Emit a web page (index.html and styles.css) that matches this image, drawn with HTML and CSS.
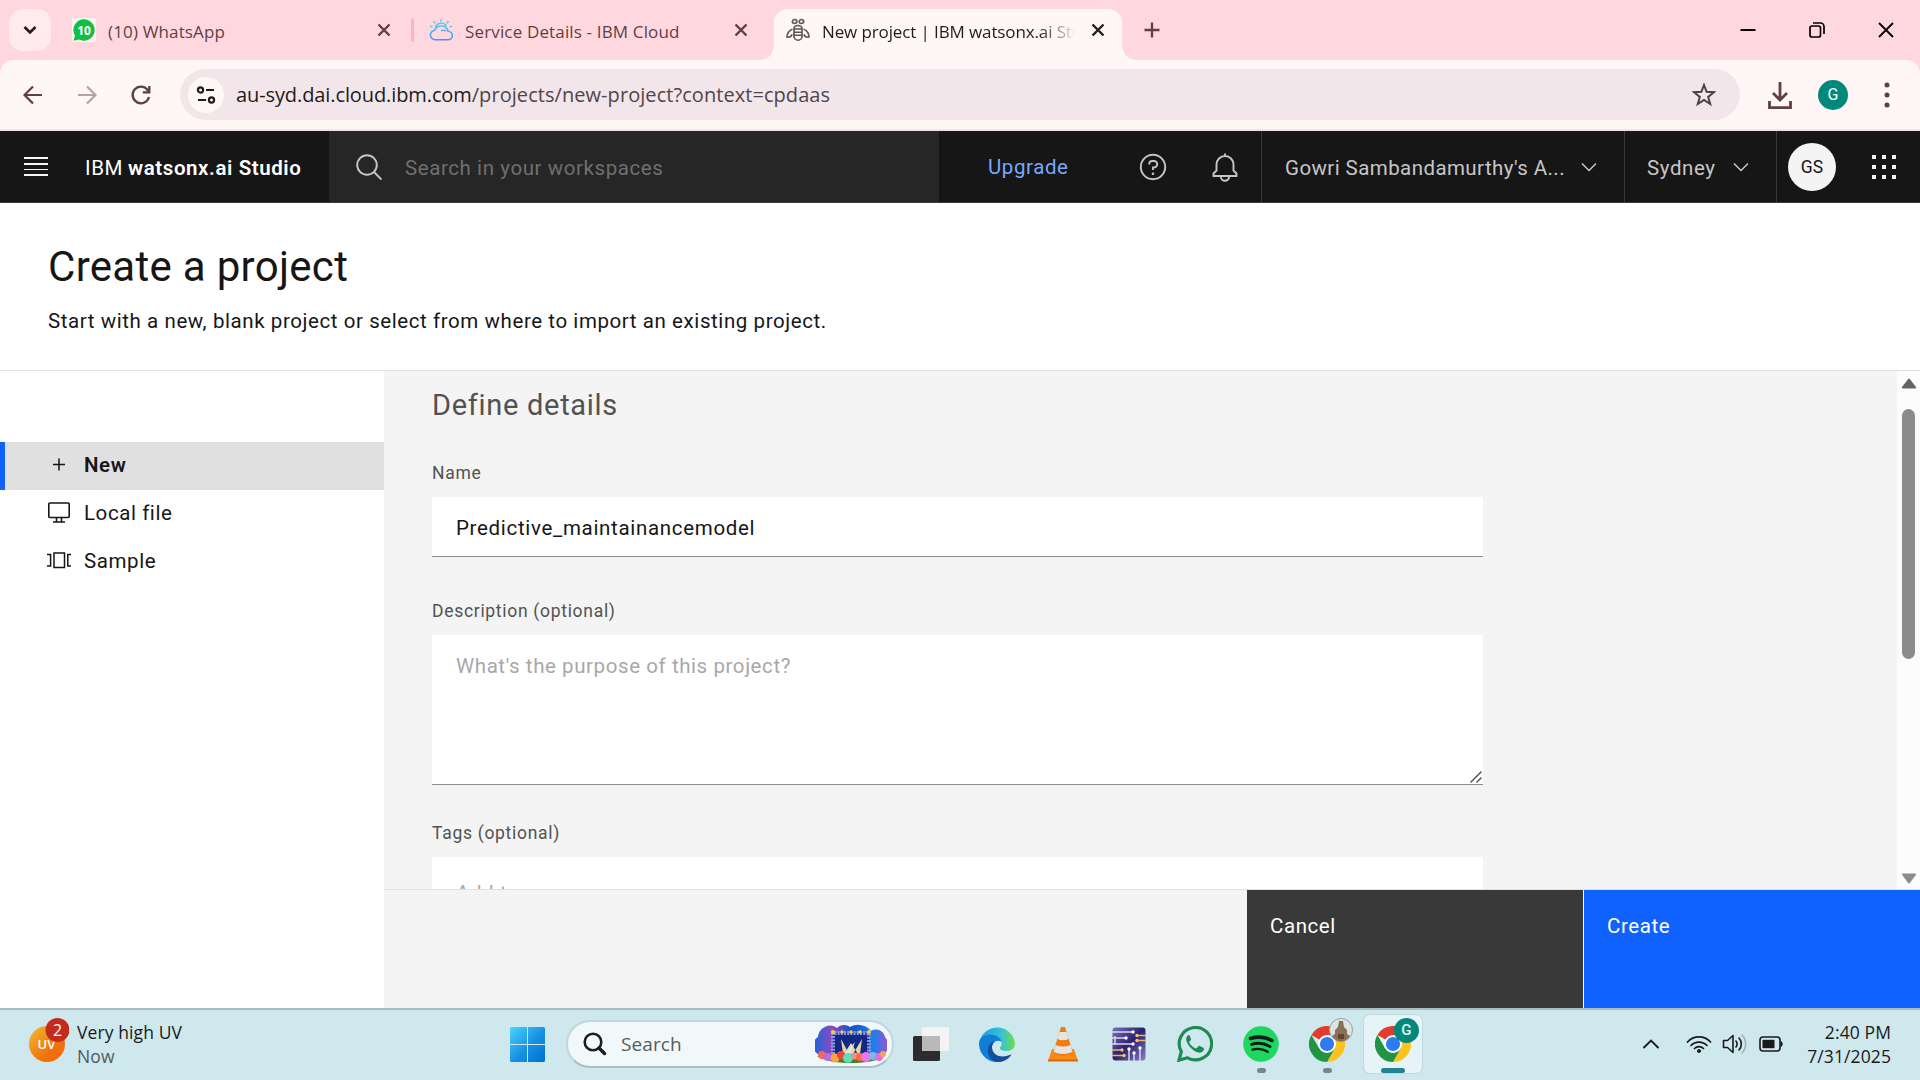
FILE: index.html
```html
<!DOCTYPE html>
<html lang="en">
<head>
<meta charset="utf-8">
<title>New project | IBM watsonx.ai Studio</title>
<link rel="stylesheet" href="styles.css">
</head>
<body>
<svg width="0" height="0" class="defs">
  <defs>
    <linearGradient id="win" gradientUnits="userSpaceOnUse" x1="0" y1="0" x2="35" y2="35"><stop offset="0" stop-color="#4cd3ff"/><stop offset=".55" stop-color="#1690e2"/><stop offset="1" stop-color="#0070d0"/></linearGradient>
    <linearGradient id="uv" x1="0" y1="0" x2="1" y2="1"><stop offset="0" stop-color="#eec030"/><stop offset=".65" stop-color="#f0700c"/><stop offset="1" stop-color="#ee6a10"/></linearGradient>
    <linearGradient id="cloud" gradientUnits="userSpaceOnUse" x1="0" y1="0" x2="0" y2="26"><stop offset="0" stop-color="#5fe0e0"/><stop offset="1" stop-color="#4589ff"/></linearGradient>
    <linearGradient id="edgeA" x1="0" y1="0" x2="1" y2="0"><stop offset="0" stop-color="#1b9de2"/><stop offset=".6" stop-color="#35c1d8"/><stop offset="1" stop-color="#6be04a"/></linearGradient>
    <linearGradient id="circ" x1="0" y1="0" x2="1" y2="1"><stop offset="0" stop-color="#7a72b8"/><stop offset=".5" stop-color="#2b2170"/><stop offset="1" stop-color="#8a80c0"/></linearGradient>
    <linearGradient id="balloon" x1="0" y1="0" x2="1" y2="0"><stop offset="0" stop-color="#1668d8"/><stop offset=".25" stop-color="#8a4ac0"/><stop offset=".5" stop-color="#1750c8"/><stop offset=".8" stop-color="#1a7ff0"/><stop offset="1" stop-color="#9a55c8"/></linearGradient>
    <symbol id="chrome" viewBox="0 0 36 36">
      <path d="M18 18 2.4 9A18 18 0 0 1 33.6 9Z" fill="#e33b2e"/>
      <path d="M18 9H33.6A18 18 0 0 1 18 36L25.8 22.5Z" fill="#fcc31e"/>
      <path d="M10.2 22.5 2.4 9A18 18 0 0 0 18 36L25.8 22.5Z" fill="#229342"/>
      <circle cx="18" cy="18" r="9" fill="#fff"/><circle cx="18" cy="18" r="7.1" fill="#2c7bf0"/>
    </symbol>
    <symbol id="close" viewBox="0 0 24 24"><path d="M6.5 6.5 17.5 17.5M17.5 6.5 6.5 17.5" stroke="currentColor" stroke-width="2.4" fill="none"/></symbol>
    <symbol id="chev" viewBox="0 0 16 10"><path d="M1 1.5 8 8.5 15 1.5" stroke="currentColor" stroke-width="1.5" fill="none"/></symbol>
  </defs>
</svg>

<div class="screen">
  <div class="tabstrip">
    <div class="tab-search"><svg width="16" height="12" viewBox="0 0 16 12"><path d="M2.5 3 8 8.5 13.5 3" stroke="#1f1a1b" stroke-width="2.6" fill="none"/></svg></div>
    <div class="tab tab-one">
      <svg width="24" height="24" viewBox="0 0 24 24"><path d="M0 24V0H24V24Z" fill="#fff" opacity=".65"/><path d="M12 1.3a10.7 10.7 0 1 1-5 20.2L1.6 22.8 3 17.6A10.7 10.7 0 0 1 12 1.3Z" fill="#0fc143"/><text x="12" y="16.6" text-anchor="middle" class="fav-num">10</text></svg>
      <span class="tab-title"><span class="t t-tab">(10) WhatsApp</span></span>
      <svg class="x" width="24" height="24"><use href="#close"/></svg>
    </div>
    <div class="tab-sep"></div>
    <div class="tab tab-two">
      <svg width="24" height="24" viewBox="0 0 24 26" preserveAspectRatio="none" fill="none" stroke="url(#cloud)" stroke-width="1.6"><path d="M6 23.5H18.5A4.6 4.6 0 0 0 19 14.3 7 7 0 0 0 5.500 13.600 5 5 0 0 0 6 23.500ZM6.500 10A6 6 0 0 1 17.500 8.800M12 4V1M6.300 5.600 4.500 3.400M17.700 5.600 19.500 3.400M3.400 9.600 1 8.800M20.600 9.600 23 8.800M12 14a5 5 0 0 1 5 0"/></svg>
      <span class="tab-title"><span class="t t-tab">Service Details - IBM Cloud</span></span>
      <svg class="x" width="24" height="24"><use href="#close"/></svg>
    </div>
    <div class="tab tab-active">
      <svg width="24" height="24" viewBox="0 0 24 27" preserveAspectRatio="none" fill="none" stroke="#5b5557" stroke-width="1.700"><circle cx="8.600" cy="4" r="2.200"/><circle cx="15.400" cy="4" r="2.200"/><path d="M8 12a4 3.600 0 0 1 8 0v8.500a4 4.500 0 0 1-8 0ZM8 12.500H16M8 16H16M8 19.500H16M6.400 12.500C3.500 14 1 17.500 1 21.500c3 .4 4.600-.5 5-3M17.600 12.500C20.500 14 23 17.500 23 21.500c-3 .4-4.600-.5-5-3"/></svg>
      <span class="tab-title fade"><span class="t t-tab3">New project | IBM watsonx.ai Studio</span></span>
      <svg class="x" width="24" height="24"><use href="#close"/></svg>
    </div>
    <svg class="new-tab" width="24" height="24" viewBox="0 0 24 24"><path d="M12 4.500V19.500M4.500 12H19.500" stroke="#5f3f46" stroke-width="2.300"/></svg>
    <div class="win-controls">
      <div><svg width="18" height="18" viewBox="0 0 18 18"><path d="M1.500 9H16.500" stroke="#000" stroke-width="2"/></svg></div>
      <div><svg width="18" height="18" viewBox="0 0 18 18" fill="none" stroke="#000" stroke-width="1.700"><rect x="2" y="5" width="10.500" height="11" rx="2"/><path d="M5 2H12.500A3.500 3.500 0 0 1 16 5.500V13"/></svg></div>
      <div><svg width="18" height="18" viewBox="0 0 18 18"><path d="M2 2 16 16M16 2 2 16" stroke="#000" stroke-width="1.800"/></svg></div>
    </div>
  </div>

  <div class="toolbar-wrap"><div class="toolbar">
    <svg class="tb" width="24" height="24" viewBox="0 0 24 24" fill="none" stroke="#5f3f46" stroke-width="2.200"><path d="M21 12H4M12 3.500 3.500 12 12 20.500"/></svg>
    <svg class="tb" width="24" height="24" viewBox="0 0 24 24" fill="none" stroke="#b3a3a6" stroke-width="2.200"><path d="M3 12H20M12 3.500 20.500 12 12 20.500"/></svg>
    <svg class="tb" width="24" height="24" viewBox="0 0 24 24" fill="none" stroke="#5f3f46" stroke-width="2.300"><path d="M20 14A8.300 8.300 0 1 1 18.600 7L20 9"/><path d="M20.300 3V9.400H13.800"/></svg>
    <div class="omnibox">
      <div class="site-info"><svg width="20" height="20" viewBox="0 0 20 20" fill="none" stroke="#1f1a1b" stroke-width="2.200"><circle cx="4.500" cy="5" r="2.600"/><path d="M10 5H18M2 15H10"/><circle cx="15.500" cy="15" r="2.600"/></svg></div>
      <span class="url"><span class="t t-url1">au-syd.dai.cloud.ibm.com</span><span class="t t-url2">/projects/new-project?context=cpdaas</span></span>
      <svg width="24" height="26" viewBox="0 0 24 26" fill="none" stroke="#4b4145" stroke-width="2"><path d="M12 3 14.600 9.800 22 10.200 16.200 14.900 18.200 22 12 18 5.800 22 7.800 14.900 2 10.200 9.400 9.800Z"/></svg>
    </div>
    <svg class="dl" width="24" height="30" viewBox="0 0 24 30" fill="none" stroke="#5f3f46" stroke-width="2.800"><path d="M12 2V20M5 13 12 20 19 13M1.500 21V27.600H22.500V21"/></svg>
    <div class="avatar-g">G</div>
    <svg class="dots" width="24" height="26" viewBox="0 0 24 26" fill="#5f3f46"><circle cx="12" cy="3" r="2.500"/><circle cx="12" cy="13" r="2.500"/><circle cx="12" cy="23" r="2.500"/></svg>
  </div></div>

  <header class="app-header">
    <div class="menu"><i></i><i></i><i></i><i></i></div>
    <div class="brand"><span class="t">IBM</span><b class="t">watsonx.ai Studio</b></div>
    <div class="app-search">
      <svg width="26" height="28" viewBox="0 0 26 28" fill="none" stroke="#c6c6c6" stroke-width="1.900"><circle cx="11" cy="12" r="9.800"/><path d="M18 19 25.500 26.500"/></svg>
      <span class="t">Search in your workspaces</span>
    </div>
    <div class="upgrade"><span class="t">Upgrade</span></div>
    <svg class="help" width="28" height="28" viewBox="0 0 28 28" fill="none" stroke="#c6c6c6" stroke-width="1.900"><circle cx="14" cy="14" r="12.200"/><path d="M10.200 11.500V11A3 3 0 0 1 13.200 8H15A3.200 3.200 0 0 1 15 14.400H14V17"/><circle cx="14" cy="20.800" r="1.300" fill="#c6c6c6" stroke="none"/></svg>
    <svg class="bell" width="28" height="30" viewBox="0 0 28 30" fill="none" stroke="#c6c6c6" stroke-width="1.900"><path d="M14 1.500V4M5.500 18.500V12.500A8.500 8.500 0 0 1 22.500 12.500V18.500L25.500 21.500V24H2.500V21.500ZM9.800 24.500A4.200 4.200 0 0 0 18.200 24.500"/></svg>
    <div class="account"><span class="t t-account">Gowri Sambandamurthy's A...</span><svg width="16" height="10"><use href="#chev"/></svg></div>
    <div class="region"><span class="t">Sydney</span><svg width="16" height="10"><use href="#chev"/></svg></div>
    <div class="user"><div class="user-circle">GS</div></div>
    <div class="switcher"><i></i><i></i><i></i><i></i><i></i><i></i><i></i><i></i><i></i></div>
  </header>

  <section class="page-head">
    <h1>Create a project</h1>
    <p>Start with a new, blank project or select from where to import an existing project.</p>
  </section>

  <div class="body">
    <nav class="side">
      <a class="item active"><svg width="24" height="24" viewBox="0 0 24 24" stroke="#161616" stroke-width="1.500"><path d="M12 5.500V17.500M6 11.500H18"/></svg><span>New</span></a>
      <a class="item"><svg width="24" height="24" viewBox="0 0 24 24" fill="none" stroke="#161616" stroke-width="1.600"><rect x="1.800" y="2" width="20.400" height="14.500" rx="1"/><path d="M9.500 16.500V20.500M14.500 16.500V20.500M6 21H18"/></svg><span>Local file</span></a>
      <a class="item"><svg width="24" height="24" viewBox="0 0 24 24" fill="none" stroke="#161616" stroke-width="1.500"><rect x="7" y="4" width="10.500" height="14.500"/><path d="M0 5.500H3.600V17H0M24 5.500H20.800V17H24"/></svg><span>Sample</span></a>
    </nav>
    <div class="main">
      <div class="scroll">
        <form class="form">
          <h2>Define details</h2>
          <label>Name</label>
          <div class="input value">Predictive_maintainancemodel</div>
          <label class="l-desc">Description (optional)</label>
          <div class="input area">What's the purpose of this project?<svg class="grip" width="12" height="12" viewBox="0 0 12 12" stroke="#4a4a4a" stroke-width="1.400"><path d="M.5 11.500 11.500 .5M6.500 11.500 11.500 6.500"/></svg></div>
          <label class="l-tags">Tags (optional)</label>
          <div class="input tags">Add tags</div>
        </form>
        <div class="scrollbar">
          <svg width="16" height="11" viewBox="0 0 16 11"><path d="M8 1.500 14.200 9.500H1.800Z" fill="#636363" stroke="#636363" stroke-width="2" stroke-linejoin="round"/></svg>
          <div class="thumb"></div>
          <svg width="16" height="11" viewBox="0 0 16 11"><path d="M8 9.500 14 1.500H2Z" fill="#8b8b8b" stroke="#8b8b8b" stroke-width="2" stroke-linejoin="round"/></svg>
        </div>
      </div>
      <div class="actions">
        <div class="btn cancel">Cancel</div>
        <div class="btn create">Create</div>
      </div>
    </div>
  </div>

  <div class="taskbar">
    <div class="weather">
      <svg width="40" height="44" viewBox="0 0 40 44"><circle cx="18" cy="26" r="18" fill="url(#uv)"/><text x="17.500" y="31" text-anchor="middle" class="uv-text">UV</text><circle cx="28.500" cy="12" r="12" fill="#c42b1c"/><text x="28.500" y="18" text-anchor="middle" class="uv-num">2</text></svg>
      <div class="weather-text"><span class="t-uv">Very high UV</span><span class="t-now">Now</span></div>
    </div>
    <svg class="start" width="35" height="35" viewBox="0 0 35 35" fill="url(#win)"><path d="M1.500 0H17V17H0V1.500Q0 0 1.500 0ZM18 0H33.500Q35 0 35 1.500V17H18ZM0 18H17V35H1.500Q0 35 0 33.500ZM18 18H35V33.500Q35 35 33.500 35H18Z"/></svg>
    <div class="task-search">
      <svg width="24" height="24" viewBox="0 0 24 24" fill="none" stroke="#1d1d1d" stroke-width="2.600"><circle cx="10" cy="10" r="8.300"/><path d="M16 16 21.500 21.500" stroke-width="3.400" stroke-linecap="round"/></svg>
      <span class="task-search-label">Search</span>
      <svg width="72" height="40" viewBox="0 0 72 40">
        <path d="M5 31A10 10 0 0 1 3 13 12 12 0 0 1 22 4 10 10 0 0 1 35 3 15 13 0 0 1 56 7 9 9 0 0 1 70 13 12 12 0 0 1 68 31Z" fill="url(#balloon)"/>
        <path d="M18 30V9H54V30" fill="#122a86" stroke="#8c9bdc" stroke-width="4" stroke-dasharray="2 1.200"/>
        <path d="M26 15 34 30H28ZM47 15 38 30H45ZM29 30 36 19 43 30Z" fill="#e8d79a"/><path d="M30 29 40 18 36 29Z" fill="#dfe6e4"/>
        <g fill="#f6cf45"><circle cx="18" cy="8" r="2"/><circle cx="27" cy="8" r="1.700"/><circle cx="36" cy="8" r="1.700"/><circle cx="45" cy="8" r="1.700"/><circle cx="54" cy="8" r="2"/></g>
        <path d="M2 32H70Q60 39 36 39T2 32Z" fill="#4c7f2c"/>
        <g><circle cx="7" cy="31" r="4" fill="#f56a5a"/><circle cx="13" cy="33" r="4" fill="#b86ae8"/><circle cx="20" cy="34" r="4.500" fill="#f9a63c"/><circle cx="26" cy="31" r="4" fill="#ee4440"/><circle cx="33" cy="34" r="5" fill="#5fe0b0"/><circle cx="40" cy="32" r="3.500" fill="#f8889a"/><circle cx="45" cy="33" r="4" fill="#ff6a3a"/><circle cx="51" cy="33" r="5" fill="#e877ee"/><circle cx="58" cy="32" r="4" fill="#7ab8f0"/><circle cx="64" cy="33" r="4" fill="#ea6ad0"/><circle cx="68" cy="30" r="3" fill="#f9a05a"/></g>
      </svg>
    </div>
    <div class="apps">
      <div class="app"><svg width="36" height="36" viewBox="0 0 36 36"><rect x="0" y="10" width="27" height="25" rx="1.500" fill="#2c2c2c"/><rect x="9" y="1" width="27" height="24" rx="1.500" fill="#f3f3f3"/><path d="M9 10H27V25H9Z" fill="#b9b9b9"/></svg></div>
      <div class="app"><svg width="36" height="36" viewBox="0 0 36 36"><path d="M1 14A18 18 0 0 1 36 17C36 23 32 25 28 25 24 25 21 24 21 22 21 21 23 20 22.500 17 22 12 16 9 11 9.500 6 10 2 12 1 14Z" fill="url(#edgeA)"/><path d="M0 18C0 11 6 8.500 11 8.500 17 8.500 22 12 22.500 15.500 17 13 13 17 13 22 13 28 17 33 23 35.300A18 18 0 0 1 0 18Z" fill="#0f7fd6"/><path d="M15.500 15.200C11 20 13 26 17.500 29 23 32 29 29.500 32.500 28.500 30 33 24 36.500 18 36 11 34.500 8 28 9 23 9.500 19 12 16 15.500 15.200Z" fill="#124f9c"/></svg></div>
      <div class="app"><svg width="32" height="36" viewBox="0 0 32 36"><path d="M5 23H27L31 35H1Z" fill="#f78b14"/><path d="M1 33.500H31V35.500H1Z" fill="#d86808"/><path d="M14 1H18L26 27Q16 33 6 27Z" fill="#f07c0c"/><path d="M12.500 6H19.500L21.600 13Q16 15.500 10.400 13ZM8.500 19Q16 22 23.500 19L25.500 26Q16 30 6.500 26Z" fill="#e4e4e4"/></svg></div>
      <div class="app"><svg width="34" height="34" viewBox="0 0 34 34"><rect x=".5" y=".5" width="33" height="33" rx="3" fill="url(#circ)"/><g fill="none" stroke="#d9d6f2" stroke-width="1.500"><path d="M0 5H20M0 11H13M3 18V9M0 17H20M17 34V22M22 34V26M28 34V20"/><path d="M24 8.500H34M24 13.500H34M0 23H10M0 28.500H12" stroke="#efb45e"/></g><g fill="#fff"><circle cx="21" cy="5" r="1.700"/><circle cx="14" cy="11" r="1.700"/><circle cx="21" cy="17" r="1.700"/><circle cx="17" cy="22" r="1.700"/><circle cx="22" cy="26" r="1.700"/><circle cx="28" cy="21" r="1.700"/></g><g fill="#f5c477"><circle cx="25" cy="8.500" r="1.700"/><circle cx="25" cy="13.500" r="1.700"/><circle cx="10" cy="23" r="1.700"/><circle cx="12" cy="28.500" r="1.700"/></g></svg></div>
      <div class="app"><svg width="36" height="36" viewBox="0 0 36 36"><path d="M2 34.200 4.300 25.600A16.200 16.200 0 1 1 10.500 31.800Z" fill="none" stroke="#1f8a55" stroke-width="3.200"/><path d="M12.500 9.200c-.7-.3-1.600 0-2.300.8-1.600 1.900-1.300 4.800.6 8 2.800 4.600 7.200 8.100 11.400 8.700 2.200.2 4.300-1.300 4.700-3.200.2-.9.100-1.400-.5-1.700l-3.700-1.800c-.6-.3-1-.2-1.500.4l-1.400 1.700c-.4.500-.9.500-1.500.2-2.500-1.200-4.500-3-5.900-5.500-.3-.5-.2-.9.200-1.300l1.200-1.500c.3-.4.300-.8.100-1.300Z" fill="#1f8a55"/></svg></div>
      <div class="app"><svg width="36" height="36" viewBox="0 0 36 36"><circle cx="18" cy="18" r="17.800" fill="#1ed760"/><g fill="none" stroke="#101f16" stroke-linecap="round"><path d="M7.500 12.500Q19 9 29 14.500" stroke-width="3.600"/><path d="M8.500 18.300Q18 15.500 27 20.500" stroke-width="2.900"/><path d="M9.500 23.600Q17.500 21.500 24.800 25.800" stroke-width="2.300"/></g></svg><i class="dot"></i></div>
      <div class="app"><svg width="36" height="36"><use href="#chrome"/></svg><i class="dot"></i><svg class="badge" width="24" height="24" viewBox="0 0 24 24"><circle cx="12" cy="12" r="11.500" fill="#dde5e4" stroke="#93a19e"/><path d="M10 3H14L15 9 18 12V16L21 18Q17 23.500 12 23.500T3 18L6 16V12L9 9Z" fill="#8b6f57"/><path d="M9 16H15V21H9Z" fill="#5d4435"/></svg></div>
      <div class="app on"><svg width="36" height="36"><use href="#chrome"/></svg><i class="dot"></i><div class="badge g">G</div></div>
    </div>
    <div class="tray">
      <svg class="up" width="18" height="12" viewBox="0 0 18 12"><path d="M1.500 10 9 2.500 16.500 10" stroke="#1a1a1a" stroke-width="1.900" fill="none"/></svg>
      <svg class="wifi" width="26" height="20" viewBox="0 0 26 20" fill="none" stroke="#1a1a1a" stroke-width="1.700" stroke-linecap="round"><path d="M1.500 8A15.500 15.500 0 0 1 24.500 8M5 11.500A11 11 0 0 1 21 11.500M8.500 14.500A6.500 6.500 0 0 1 17.500 14.500"/><circle cx="13" cy="17" r="1.600" fill="#1a1a1a" stroke-width=".8"/></svg>
      <svg class="vol" width="26" height="22" viewBox="0 0 26 22" fill="none" stroke="#1a1a1a" stroke-width="1.600" stroke-linecap="round" stroke-linejoin="round"><path d="M1.500 7.500H5.500L11 2.500V19.500L5.500 14.500H1.500ZM14 8A5 5 0 0 1 14 14M17 5A9 9 0 0 1 17 17"/><path d="M20 2A13 13 0 0 1 20 20" stroke="#9fb4b9"/></svg>
      <svg class="bat" width="26" height="18" viewBox="0 0 26 18"><rect x="2" y="2" width="20" height="14" rx="3" fill="none" stroke="#1a1a1a" stroke-width="1.600"/><rect x="4.500" y="4.800" width="12" height="8.400" fill="#1a1a1a"/><path d="M22.500 6.500H24Q25.500 9 24 11.500H22.500Z" fill="#1a1a1a"/></svg>
      <div class="clock"><span>2:40 PM</span><span>7/31/2025</span></div>
    </div>
  </div>
</div>
</body>
</html>
```

FILE: styles.css
```css
* { box-sizing: border-box; }
body { margin: 0; overflow: hidden; }
.defs { position: absolute; }
svg { display: block; flex: none; }
.t { white-space: nowrap; }
h1, h2, p { margin: 0; font-weight: 400; }

.screen { width: 1920px; height: 1080px; display: flex; flex-direction: column; background: #fff; font-family: Roboto, "Liberation Sans", sans-serif; color: #161616; font-size: 20.5px; letter-spacing: .58px; }

/* Browser tabs */
.tabstrip { height: 60px; flex: none; background: #ffd8df; display: flex; align-items: center; padding-left: 9px; color: #5f3f46; font-family: "Open Sans", sans-serif; font-size: 17px; letter-spacing: .15px; }
.tab-search { width: 42px; height: 42px; border-radius: 14px; background: #ffeaee; display: grid; place-items: center; margin-right: 9px; }
.tab { height: 51px; align-self: flex-end; display: flex; align-items: center; gap: 12px; padding-bottom: 9px; }
.tab-title { flex: 1; overflow: hidden; white-space: nowrap; line-height: 26px; padding-top: 3px; }
.tab-one { width: 351px; padding-left: 12px; padding-right: 15px; }
.tab-two { width: 360px; padding-left: 15px; padding-right: 21px; }
.tab-sep { width: 3px; height: 24px; border-radius: 2px; background: #ffb2c0; }
.tab-active { width: 348px; padding-left: 12px; padding-right: 12px; background: #fff7f5; border-radius: 14px 14px 0 0; color: #231a1c; position: relative; }
.tab-active::before, .tab-active::after { content: ""; position: absolute; bottom: 0; width: 14px; height: 14px; }
.tab-active::before { left: -14px; background: radial-gradient(circle at 0 0, transparent 13.5px, #fff7f5 14px); }
.tab-active::after { right: -14px; background: radial-gradient(circle at 100% 0, transparent 13.5px, #fff7f5 14px); }
.t-tab3 { letter-spacing: -.12px; }
.fade { -webkit-mask-image: linear-gradient(90deg, #000 86%, transparent 101%); mask-image: linear-gradient(90deg, #000 86%, transparent 101%); }
.fav-num { font: 700 12px "Open Sans", sans-serif; letter-spacing: 0; fill: #fff; }
.new-tab { margin-left: 18px; }
.win-controls { margin-left: auto; display: flex; }
.win-controls div { width: 69px; display: grid; place-items: center; }

/* Browser toolbar */
.toolbar-wrap { flex: none; height: 71px; background: #ffd8df; }
.toolbar { height: 71px; border-radius: 14px 14px 0 0; background: #fff7f5; border-bottom: 2px solid #f2e3e5; display: flex; align-items: center; padding-left: 21px; }
.tb { margin-right: 30px; }
.omnibox { width: 1560px; height: 51px; margin-left: -3px; border-radius: 26px; background: #f2e6ea; display: flex; align-items: center; padding: 0 24px 0 8px; }
.site-info { width: 36px; height: 36px; border-radius: 50%; background: #fff7f5; display: grid; place-items: center; margin-right: 12px; }
.url { flex: 1; font-family: "Open Sans", sans-serif; font-size: 20px; color: #1f1a1b; line-height: 30px; letter-spacing: 0; }
.t-url1 { letter-spacing: -.1px; }
.t-url2 { color: #50454a; letter-spacing: .06px; }
.dl { margin-left: 28px; }
.avatar-g { width: 30px; height: 30px; margin-left: 26px; border-radius: 50%; background: #00897b; color: #fff; font-size: 16px; letter-spacing: 0; display: grid; place-items: center; }
.dots { margin-left: 27px; }

/* Application header */
.app-header { flex: none; height: 72px; background: #161616; border-bottom: 1px solid #393939; display: flex; align-items: center; color: #c6c6c6; }
.app-header .t { padding-top: 2px; }
.menu { width: 24px; margin-left: 24px; display: grid; gap: 4px; }
.menu i { height: 1.6px; background: #f4f4f4; }
.brand { width: 244px; margin-left: 37px; display: flex; gap: 5px; color: #fff; }
.brand b { font-weight: 600; }
.app-search { width: 610px; height: 71px; background: #262626; display: flex; align-items: center; gap: 23px; padding-left: 27px; color: #6f6f6f; }
.upgrade { width: 150px; padding-left: 49px; color: #78a9ff; }
.help { margin-left: 50px; }
.bell { margin-left: 44px; }
.account, .region { height: 71px; border-left: 1px solid #393939; display: flex; align-items: center; }
.account { width: 363px; margin-left: 22px; padding: 0 27px 0 23px; justify-content: space-between; }
.t-account { letter-spacing: .42px; }
.region { width: 152px; padding: 0 27px 0 22px; justify-content: space-between; }
.user { width: 72px; height: 71px; border-left: 1px solid #393939; display: flex; align-items: center; padding-left: 11px; }
.user-circle { width: 48px; height: 48px; border-radius: 50%; background: #f4f4f4; color: #161616; font-size: 17.5px; letter-spacing: 0; display: grid; place-items: center; }
.switcher { margin-left: 24px; display: grid; grid-template-columns: repeat(3, 4px); gap: 6px; }
.switcher i { height: 4px; background: #f4f4f4; }

/* Page heading */
.page-head { flex: none; height: 168px; border-bottom: 1px solid #e0e0e0; padding: 36px 48px 0; }
h1 { font-size: 42px; line-height: 56px; letter-spacing: .3px; }
.page-head p { line-height: 26px; margin-top: 13px; }

/* Body */
.body { flex: 1; min-height: 0; display: flex; }
.side { width: 384px; flex: none; padding-top: 71px; }
.item { height: 48px; display: flex; align-items: center; gap: 13px; padding: 0 0 3px 47px; }
.item.active { background: #e0e0e0; border-left: 5px solid #0f62fe; padding-left: 42px; font-weight: 600; }
.item span { padding-top: 1px; }
.main { flex: 1; background: #f4f4f4; display: flex; flex-direction: column; }
.scroll { height: 518px; display: flex; justify-content: space-between; overflow: hidden; }
.form { width: 1051px; margin-left: 48px; padding-top: 14px; }
h2 { font-size: 29px; line-height: 40px; color: #525252; letter-spacing: .7px; }
label { display: block; font-size: 17.5px; line-height: 24px; color: #525252; margin-top: 36px; margin-bottom: 12px; letter-spacing: .7px; }
.input { height: 60px; background: #fff; border-bottom: 1px solid #8d8d8d; padding: 18px 24px; line-height: 26px; }
.value { letter-spacing: .68px; }
.l-desc { margin-top: 42px; }
.area { height: 150px; color: #a8a8a8; position: relative; }
.grip { position: absolute; right: 1px; bottom: 1px; }
.l-tags { margin-top: 36px; }
.tags { color: #a8a8a8; padding-top: 23px; }
.scrollbar { width: 23px; background: #fcfcfc; display: flex; flex-direction: column; align-items: center; padding: 7px 0 5px; }
.thumb { width: 13px; height: 250px; margin: 20px 0 auto; border-radius: 7px; background: #8b8b8b; }
.actions { flex: 1; border-top: 1px solid #e0e0e0; display: flex; justify-content: flex-end; gap: 1px; color: #fff; }
.btn { width: 336px; padding: 23px 23px; line-height: 26px; }
.cancel { background: #393939; }
.create { background: #0f62fe; }

/* Taskbar */
.taskbar { flex: none; height: 72px; background: #cfe8ee; border-top: 2px solid #a9bcc2; padding-bottom: 2px; display: flex; align-items: center; font-family: "Open Sans", sans-serif; font-size: 17.5px; letter-spacing: .1px; color: #1a1a1a; }
.weather { width: 481px; margin-left: 29px; display: flex; align-items: center; gap: 8px; }
.weather > svg { margin-top: -8px; }
.weather-text { display: grid; line-height: 24px; }
.t-now { color: #505a5d; }
.uv-text { font: 600 13px "Open Sans", sans-serif; fill: #fff; }
.uv-num { font: 16px "Open Sans", sans-serif; fill: #fff; }
.task-search { width: 328px; height: 48px; margin-left: 21px; border-radius: 24px; background: #f1f8fa; border: 2px solid #bfd7dd; border-bottom-color: #a9bfc5; display: flex; align-items: center; padding: 0 5px 0 15px; color: #555d60; font-size: 19px; }
.task-search-label { flex: 1; margin-left: 14px; }
.apps { display: flex; margin-left: 4px; }
.app { width: 66px; height: 58px; display: grid; place-items: center; position: relative; }
.app.on { width: 58px; margin-left: 4px; background: #e6f3f7; border-radius: 6px; box-shadow: 0 0 0 1px #c0d9df; }
.dot { position: absolute; bottom: 0; left: calc(50% - 4.5px); width: 9px; height: 5px; border-radius: 3px; background: #76868b; }
.on .dot { left: calc(50% - 12px); width: 24px; background: #218298; }
.badge { position: absolute; left: 35px; top: 3px; }
.badge.g { left: 30px; width: 25px; height: 25px; border-radius: 50%; background: #00897b; color: #e0f2f1; font: 500 15px/25px Roboto, sans-serif; text-align: center; }
.tray { margin-left: auto; display: flex; align-items: center; padding-right: 29px; }
.wifi { margin-left: 26px; }
.vol { margin-left: 10px; }
.bat { margin-left: 10px; }
.clock { width: 107px; display: grid; justify-items: end; line-height: 24px; }
```
